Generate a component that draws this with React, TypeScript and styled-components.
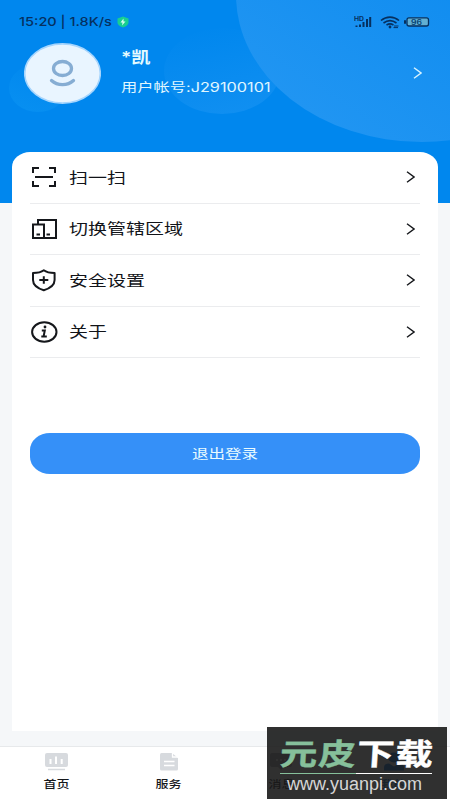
import React from 'react';
import styled, { createGlobalStyle } from 'styled-components';

const Global = createGlobalStyle`
  * { box-sizing: border-box; }
  body { margin: 0; background: #f5f7f9; font-family: Inter, "Noto Sans CJK SC", sans-serif; }
`;

const Screen = styled.div`
  width: 450px; height: 800px; position: relative; overflow: hidden;
  display: flex; flex-direction: column; background: #f5f7f9;
`;
const Hero = styled.header`
  position: relative; height: 203px; flex: none; background: #0087ee; overflow: hidden;
`;
const Bubbles = styled.svg`
  position: absolute; inset: 0; width: 450px; height: 203px;
`;
const StatusBar = styled.div`
  position: relative; height: 43px; padding: 1px 20px 0 19px;
  display: flex; align-items: center; color: #06305f;
`;
const Label = styled.span<{ $size: number; $stretch: number; $weight?: number; $color?: string; $origin?: string }>`
  display: block; white-space: nowrap; line-height: 1.4;
  font-size: ${p => p.$size}px; font-weight: ${p => p.$weight ?? 400};
  color: ${p => p.$color ?? 'inherit'};
  transform: scaleX(${p => p.$stretch}); transform-origin: ${p => p.$origin ?? 'left'} center;
`;
const Clock = styled.div` width: 98px; `;
const Indicators = styled.svg` margin-left: auto; flex: none; `;
const Profile = styled.div`
  position: relative; height: 60px; padding: 0 28px 0 24px; display: flex; align-items: center;
`;
const Identity = styled.div`
  flex: 1; margin-left: 20px; align-self: stretch; display: flex; flex-direction: column; gap: 11px; padding-top: 3px;
`;
const Card = styled.main`
  position: relative; flex: none; width: 426px; height: 579px; margin: -51px 12px 0; padding: 0 18px;
  background: #fff; border-radius: 18px 18px 0 0 / 15px 15px 0 0;
`;
const Row = styled.div`
  height: 51.5px; display: flex; align-items: center; border-bottom: 1px solid #ebecee; color: #111318;
  padding-right: 5px;
  > svg { margin-left: auto; }
`;
const IconBox = styled.div` width: 39px; height: 26px; display: flex; align-items: center; `;
const Logout = styled.button`
  display: flex; align-items: center; justify-content: center; width: 390px; height: 41px;
  margin: 74.5px 0 0; padding: 0; border: 0; border-radius: 20px / 17px; background: #3590f8; font-family: inherit;
`;
const Nav = styled.nav`
  flex: none; height: 54px; margin-top: 15px; border-top: 1px solid #e7e9eb; background: #fff;
  display: grid; grid-template-columns: repeat(4, 112.5px);
`;
const Tab = styled.div`
  display: flex; flex-direction: column; align-items: center; padding-top: 5px; gap: 5.5px;
`;
const Watermark = styled.div`
  position: absolute; left: 267px; top: 727px; width: 180px; height: 72px; background: rgba(26, 26, 26, .9);
  display: flex; flex-direction: column; padding: 4px 0 0 13px;
`;
const Brand = styled.div`
  display: flex; height: 42px; width: 126px; font: 700 30px/42px "Noto Sans CJK SC", sans-serif; letter-spacing: 0.8px;
  color: #fff; -webkit-text-stroke: 0.4px currentColor; transform: scaleX(1.25) skewX(-3deg); transform-origin: left center;
`;
const Green = styled.span` color: #86c09b; `;
const Rule = styled.div`
  flex: none; width: 152px; height: 1px; background: linear-gradient(90deg, #86c09b 50%, #fff 50%);
`;
const Site = styled.div`
  margin: 0 0 0 7px; font: 18px/20px "Liberation Sans", sans-serif; color: #d6d6d6; white-space: nowrap;
`;

const Chevron = ({ color = '#15171b' }: { color?: string }) => (
  <svg width="9" height="12" viewBox="0 0 9 12" fill="none" stroke={color} strokeWidth="1.4">
    <path d="M1 .8 8 6 1 11.2" />
  </svg>
);

const Avatar = () => (
  <svg width="77" height="61" viewBox="0 0 77 61" fill="none">
    <ellipse cx="38.5" cy="30.5" rx="37.8" ry="29.6" fill="#e9f5ff" stroke="#a6d5fd" strokeWidth="1.6" />
    <ellipse cx="38.5" cy="25.5" rx="9" ry="7" stroke="#86add3" strokeWidth="3.3" />
    <path d="M27.5 37.5c6 5.5 16 5.5 22 0" stroke="#86add3" strokeWidth="3.3" strokeLinecap="round" />
  </svg>
);

const ScanIcon = () => (
  <svg width="28" height="22" viewBox="0 0 28 22" fill="none" stroke="#15171b" strokeWidth="2">
    <path d="M3 7V2h6M19 2h6v5M3 15v5h6M19 20h6v-5M5 11h18" />
  </svg>
);
const AreaIcon = () => (
  <svg width="28" height="22" viewBox="0 0 28 22" fill="none" stroke="#15171b" strokeWidth="2">
    <path d="M8 6V2h18v18H3V6.5h11v13M6.5 16.5h3.500M16.500 16.500h3.500" />
  </svg>
);
const ShieldIcon = () => (
  <svg width="28" height="24" viewBox="0 0 28 24" fill="none" stroke="#15171b" strokeWidth="2">
    <path d="M13.8 2.3C11 4.4 7.5 5 3 5v7c0 5 4.5 8.3 10.8 10.2C20 20.3 24.6 17 24.6 12V5c-4.6 0-8-.6-10.8-2.7ZM9.3 12h9M13.8 8.3v7.4" strokeLinejoin="round" />
  </svg>
);
const InfoIcon = () => (
  <svg width="28" height="24" viewBox="0 0 28 24" fill="none" stroke="#15171b" strokeWidth="2">
    <ellipse cx="14.3" cy="12" rx="12.2" ry="9.7" />
    <path d="M11.8 10.4h3l-1.2 6h3.2M11.3 16.4h2.4" />
    <circle cx="15" cy="7" r="1.4" fill="#15171b" stroke="none" />
  </svg>
);

const ChartIcon = () => (
  <svg width="24" height="20" viewBox="0 0 24 20">
    <rect x="1" y="1" width="23" height="14" rx="2" fill="#d7dade" />
    <path d="M6.5 7v5M12 4.5v7.5M17.7 7v5" stroke="#fff" strokeWidth="2" />
    <path d="M4 17.5h17" stroke="#d7dade" strokeWidth="1.5" />
  </svg>
);
const DocIcon = () => (
  <svg width="20" height="20" viewBox="0 0 20 20">
    <path d="M2.5 1H13l6 5v11q0 1.500-1.500 1.500h-15Q1 18.500 1 17V2.500Q1 1 2.500 1Z" fill="#d7dade" />
    <path d="M13.5 1v4h5.500M5 9.500h10.500M5 13.500h10.500" fill="none" stroke="#fff" strokeWidth="1.3" />
  </svg>
);
const ChatIcon = () => (
  <svg width="24" height="20" viewBox="0 0 24 20">
    <path d="M3 1h18q2 0 2 2v10q0 2-2 2h-6l-3 3-3-3H3q-2 0-2-2V3q0-2 2-2Z" fill="#a9adb2" />
    <path d="M7 8h2M11 8h2M15 8h2" stroke="#fff" strokeWidth="2" />
  </svg>
);
const PersonIcon = () => (
  <svg width="24" height="20" viewBox="0 0 24 20" fill="#0870dc">
    <ellipse cx="12" cy="5.5" rx="6" ry="5" />
    <path d="M2 18.500v-3q0-4 5-4l5 3 5-3q5 0 5 4v3Z" />
  </svg>
);

const rows = [
  { label: '扫一扫', icon: <ScanIcon /> },
  { label: '切换管辖区域', icon: <AreaIcon /> },
  { label: '安全设置', icon: <ShieldIcon /> },
  { label: '关于', icon: <InfoIcon /> },
];
const tabs = [
  { label: '首页', icon: <ChartIcon /> },
  { label: '服务', icon: <DocIcon /> },
  { label: '消息', icon: <ChatIcon /> },
  { label: '我的', icon: <PersonIcon />, color: '#0870dc' },
];

export default function App() {
  return (
    <Screen>
      <Global />
      <Hero>
        <Bubbles viewBox="0 0 450 203">
          <defs>
            <linearGradient id="big" x1="0.2" y1="0.9" x2="0.7" y2="0.3">
              <stop offset="0" stopColor="#2095f2" />
              <stop offset="1" stopColor="#0b8aef" />
            </linearGradient>
            <linearGradient id="mid" x1="0.6" y1="1" x2="0.3" y2="0">
              <stop offset="0" stopColor="#108ff1" />
              <stop offset="1" stopColor="#0087ee" />
            </linearGradient>
            <linearGradient id="small" x1="0.4" y1="1" x2="0.8" y2="0">
              <stop offset="0" stopColor="#078ff1" />
              <stop offset="1" stopColor="#0087ee" />
            </linearGradient>
          </defs>
          <ellipse cx="222" cy="71" rx="58" ry="43" fill="url(#mid)" />
          <ellipse cx="38" cy="88" rx="29" ry="24" fill="url(#small)" />
          <ellipse cx="422" cy="-5" rx="186" ry="147" fill="url(#big)" />
        </Bubbles>
        <StatusBar>
          <Clock><Label $size={12} $stretch={1.21} $weight={500}>15:20 | 1.8K/s</Label></Clock>
          <svg width="12" height="12" viewBox="0 0 12 12">
            <path d="m6 .5 5.500 2v4q0 3-5.500 5Q.5 9.500.5 6.500v-4Z" fill="#18cf91" />
            <path d="M6.500 2.500 3.500 6.500h2L5 9.500l3.500-4h-2Z" fill="#d9fff0" />
          </svg>
          <Indicators width="76" height="14" viewBox="0 0 76 14" fill="none">
            <text x="0" y="5.5" fontSize="5.5" fontWeight="700" textLength="10" lengthAdjust="spacingAndGlyphs" fill="#06305f">HD</text>
            <path d="M2.500 12v-1.500M6 12V9.500M9.500 12V7M13 12V4M16.200 12V2" stroke="#06305f" strokeWidth="2" />
            <path d="M27 5.500c5.500-4.500 12.500-4.500 18 0M29.500 8c4-3 9-3 13 0M32.500 10.200c2-1.500 5-1.500 7 0" stroke="#06305f" strokeWidth="1.6" />
            <circle cx="36" cy="12" r="1.4" fill="#06305f" />
            <path d="M40 11h4.500M39.500 12.600h4.500" stroke="#06305f" />
            <rect x="53" y="2.8" width="21.5" height="8.2" rx="2" fill="#62afd2" stroke="#06305f" strokeWidth="1.3" />
            <path d="M51 5.200v3.500" stroke="#06305f" strokeWidth="2" />
            <text x="57" y="9.6" fontSize="7.5" fontWeight="600" textLength="11" lengthAdjust="spacingAndGlyphs" fill="#064070">96</text>
          </Indicators>
        </StatusBar>
        <Profile>
          <Avatar />
          <Identity>
            <Label $size={16} $stretch={1.2} $weight={600} $color="#e4faff">*凯</Label>
            <Label $size={12.5} $stretch={1.3} $color="#e0f7ff">用户帐号:J29100101</Label>
          </Identity>
          <Chevron color="#d8f3ff" />
        </Profile>
      </Hero>
      <Card>
        {rows.map(r => (
          <Row key={r.label}>
            <IconBox>{r.icon}</IconBox>
            <Label $size={15} $stretch={1.265}>{r.label}</Label>
            <Chevron />
          </Row>
        ))}
        <Logout><Label $size={13} $stretch={1.27} $color="#e9fbff" $origin="center">退出登录</Label></Logout>
      </Card>
      <Nav>
        {tabs.map(t => (
          <Tab key={t.label}>
            {t.icon}
            <Label $size={10.5} $stretch={1.24} $weight={500} $color={t.color ?? '#15171b'} $origin="center">{t.label}</Label>
          </Tab>
        ))}
      </Nav>
      <Watermark>
        <Brand><Green>元皮</Green>下载</Brand>
        <Rule />
        <Site>www.yuanpi.com</Site>
      </Watermark>
    </Screen>
  );
}
